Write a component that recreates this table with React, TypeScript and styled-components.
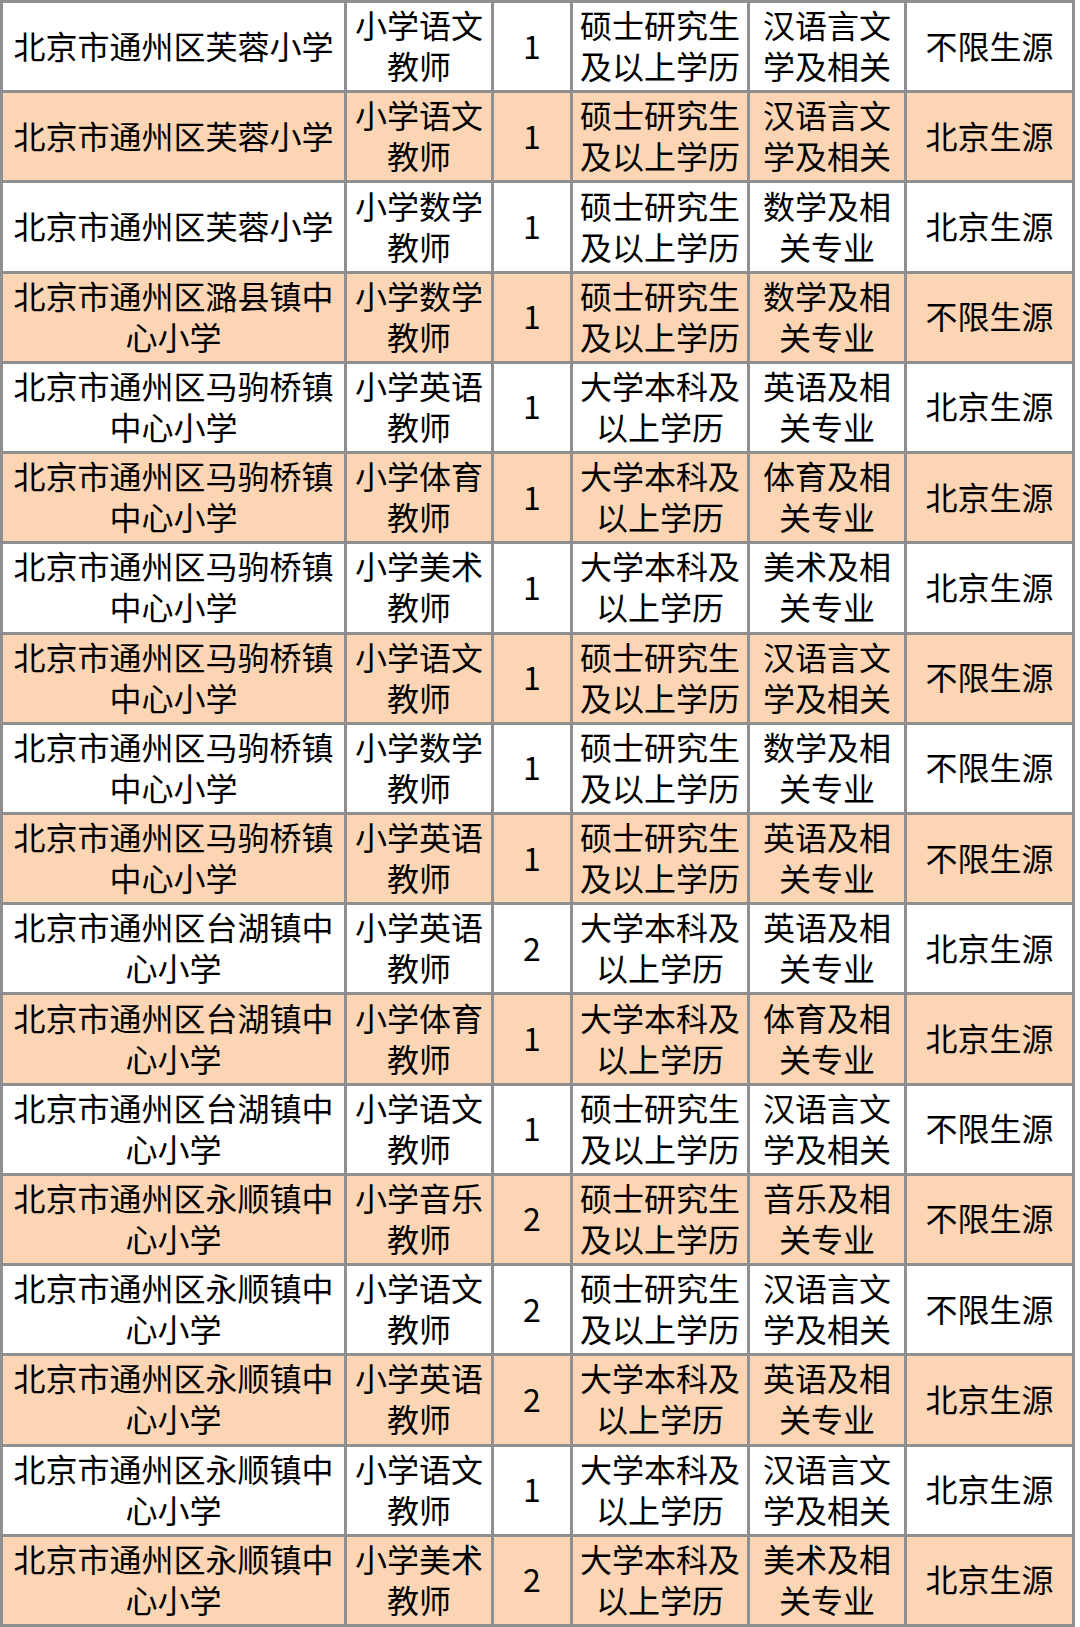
import * as React from 'react';
import styled, { createGlobalStyle } from 'styled-components';

const GlobalStyle = createGlobalStyle`
    html, body {
        margin: 0;
        padding: 0;
        background: #ffffff;
    }
    body {
        font-family: "Noto Sans CJK SC", "Noto Sans", sans-serif;
        color: #000000;
    }
`;

const Sheet = styled.div`
    width: 1075px;
    height: 1627px;
    box-sizing: border-box;
    padding: 3px;
    display: grid;
    grid-template-columns: 341px 144px 76px 174px 154px 165px;
    grid-template-rows: repeat(18, 1fr);
    gap: 3px;
    background: #8f8f8f;
`;

const Cell = styled.div<{ $shaded: boolean }>`
    display: flex;
    flex-direction: column;
    align-items: center;
    justify-content: center;
    box-sizing: border-box;
    padding-bottom: 3px;
    background: ${(p) => (p.$shaded ? '#fcd5b4' : '#ffffff')};
    font-size: 32px;
    line-height: 41px;
    white-space: nowrap;
`;

const Line = styled.span`
    display: block;
    text-align: center;
`;

const FUYONG = ['北京市通州区芙蓉小学'];
const LUXIAN = ['北京市通州区潞县镇中', '心小学'];
const MAJUQIAO = ['北京市通州区马驹桥镇', '中心小学'];
const TAIHU = ['北京市通州区台湖镇中', '心小学'];
const YONGSHUN = ['北京市通州区永顺镇中', '心小学'];

const SHUOSHI = ['硕士研究生', '及以上学历'];
const BENKE = ['大学本科及', '以上学历'];

const major = (name: string) =>
    name === '汉语言文' ? ['汉语言文', '学及相关'] : [`${name}及相`, '关专业'];

const post = (subject: string) => [`小学${subject}`, '教师'];

type Row = string[][];

const rows: Row[] = [
    [FUYONG, post('语文'), ['1'], SHUOSHI, major('汉语言文'), ['不限生源']],
    [FUYONG, post('语文'), ['1'], SHUOSHI, major('汉语言文'), ['北京生源']],
    [FUYONG, post('数学'), ['1'], SHUOSHI, major('数学'), ['北京生源']],
    [LUXIAN, post('数学'), ['1'], SHUOSHI, major('数学'), ['不限生源']],
    [MAJUQIAO, post('英语'), ['1'], BENKE, major('英语'), ['北京生源']],
    [MAJUQIAO, post('体育'), ['1'], BENKE, major('体育'), ['北京生源']],
    [MAJUQIAO, post('美术'), ['1'], BENKE, major('美术'), ['北京生源']],
    [MAJUQIAO, post('语文'), ['1'], SHUOSHI, major('汉语言文'), ['不限生源']],
    [MAJUQIAO, post('数学'), ['1'], SHUOSHI, major('数学'), ['不限生源']],
    [MAJUQIAO, post('英语'), ['1'], SHUOSHI, major('英语'), ['不限生源']],
    [TAIHU, post('英语'), ['2'], BENKE, major('英语'), ['北京生源']],
    [TAIHU, post('体育'), ['1'], BENKE, major('体育'), ['北京生源']],
    [TAIHU, post('语文'), ['1'], SHUOSHI, major('汉语言文'), ['不限生源']],
    [YONGSHUN, post('音乐'), ['2'], SHUOSHI, major('音乐'), ['不限生源']],
    [YONGSHUN, post('语文'), ['2'], SHUOSHI, major('汉语言文'), ['不限生源']],
    [YONGSHUN, post('英语'), ['2'], BENKE, major('英语'), ['北京生源']],
    [YONGSHUN, post('语文'), ['1'], BENKE, major('汉语言文'), ['北京生源']],
    [YONGSHUN, post('美术'), ['2'], BENKE, major('美术'), ['北京生源']],
];

export default function App() {
    return (
        <>
            <GlobalStyle />
            <Sheet>
                {rows.map((row, r) =>
                    row.map((lines, c) => (
                        <Cell key={`${r}-${c}`} $shaded={r % 2 === 1}>
                            {lines.map((text, i) => (
                                <Line key={i}>{text}</Line>
                            ))}
                        </Cell>
                    ))
                )}
            </Sheet>
        </>
    );
}
